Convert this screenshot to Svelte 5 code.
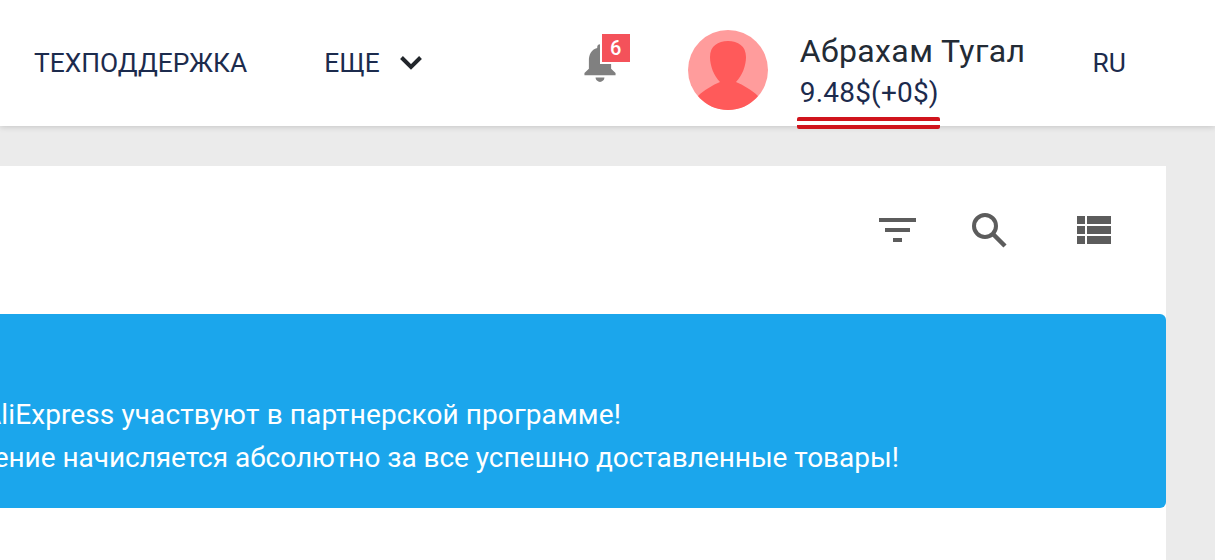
<script>
  const notifications = 6;
</script>

<style>
  :global(body) {
    margin: 0;
    background: #ebebeb;
    overflow: hidden;
  }
  .page {
    width: 1215px;
    height: 560px;
    overflow: hidden;
    font-family: Roboto, "Liberation Sans", sans-serif;
  }
  .header {
    height: 126px;
    background: #fff;
    box-shadow: 0 1px 6px rgba(0, 0, 0, 0.16);
    display: flex;
    align-items: center;
    padding-left: 34px;
    color: #1c2b4d;
    font-size: 26.4px;
    position: relative;
  }
  .more {
    display: flex;
    align-items: center;
    gap: 17px;
    margin-left: 77px;
  }
  .bell {
    position: relative;
    width: 40px;
    height: 40px;
    margin-left: 155px;
    margin-top: -2px;
  }
  .bell svg {
    display: block;
  }
  .badge {
    position: absolute;
    left: 22px;
    top: -8px;
    width: 28px;
    height: 28px;
    background: #f4525a;
    box-shadow: -2px 2px 0 #fff;
    color: #fff;
    font-size: 20px;
    font-weight: 500;
    line-height: 28px;
    text-align: center;
  }
  .avatar {
    margin-left: 68px;
    margin-top: 14px;
    width: 80px;
    height: 80px;
    flex: none;
  }
  .user {
    margin-left: 32px;
    margin-top: 20px;
    display: flex;
    flex-direction: column;
    align-items: flex-start;
  }
  .name {
    font-size: 32px;
    line-height: 40px;
    color: #232b35;
    letter-spacing: 0.4px;
  }
  .balance {
    font-size: 28px;
    line-height: 44px;
    letter-spacing: 0.2px;
    color: #1c2b4d;
    position: relative;
  }
  .balance::after {
    content: "";
    position: absolute;
    left: -3px;
    right: -1px;
    top: 46px;
    height: 4px;
    border-top: 4px solid #d0141c;
    border-bottom: 4px solid #d0141c;
    border-radius: 2px;
  }
  .lang {
    margin-left: 67px;
  }
  .card {
    margin-top: 40px;
    width: 1166px;
    height: 394px;
    background: #fff;
    display: flex;
    flex-direction: column;
  }
  .tools {
    height: 148px;
    display: flex;
    justify-content: flex-end;
    align-items: center;
    padding-right: 54px;
    box-sizing: border-box;
    padding-bottom: 19px;
  }
  .tools svg {
    display: block;
    fill: #5c5c5c;
  }
  .search {
    margin-left: 53px;
  }
  .list {
    margin-left: 68px;
  }
  .banner {
    height: 194px;
    background: #1ba6ec;
    border-radius: 0 6px 6px 0;
    color: #fff;
    font-size: 28px;
    line-height: 43px;
    padding-top: 79px;
    box-sizing: border-box;
    white-space: nowrap;
  }
  .first {
    margin-left: -17px;
    letter-spacing: 0.1px;
  }
  .second {
    margin-left: -166px;
    letter-spacing: -0.04px;
  }
</style>

<div class="page">
  <div class="header">
    <span>ТЕХПОДДЕРЖКА</span>
    <div class="more">
      <span>ЕЩЕ</span>
      <svg width="28" height="18" viewBox="0 0 28 18">
        <path d="M4.500 3.500 L14 13 L23.500 3.500" fill="none" stroke="#22262b" stroke-width="4" />
      </svg>
    </div>
    <div class="bell">
      <svg width="40" height="40" viewBox="0 0 36 36">
        <path d="M18 2c-1.500 0-2.500 1-2.500 2.500v1C10 7 8 11.500 8 17v7l-4 4v2h28v-2l-4-4v-7c0-5.500-2-10-7.500-11.500v-1C20.500 3 19.500 2 18 2z" fill="#808080" />
        <path d="M14 32h8c0 2-2 4-4 4s-4-2-4-4z" fill="#808080" />
      </svg>
      <div class="badge">{notifications}</div>
    </div>
    <svg class="avatar" viewBox="0 0 80 80">
      <circle cx="40" cy="40" r="40" fill="#ff9c9c" />
      <path d="M10 66 C16 60 25 55 32 52 C26 46 22 36 22 27 C22 16 30 11 40 11 C50 11 58 16 58 27 C58 36 54 46 48 52 C55 55 64 60 70 66 C62 75 52 80 40 80 C28 80 18 75 10 66 Z" fill="#ff5a5a" />
    </svg>
    <div class="user">
      <div class="name">Абрахам Тугал</div>
      <div class="balance">9.48$(+0$)</div>
    </div>
    <span class="lang">RU</span>
  </div>

  <div class="card">
    <div class="tools">
      <svg width="38" height="28" viewBox="0 0 38 28">
        <rect x="0" y="1" width="37" height="4" />
        <rect x="6" y="11" width="25" height="4" />
        <rect x="14" y="21" width="9" height="4" />
      </svg>
      <svg class="search" width="38" height="38" viewBox="0 0 38 38">
        <circle cx="15" cy="14" r="11" fill="none" stroke="#5c5c5c" stroke-width="4" />
        <path d="M23 22 L35 34" fill="none" stroke="#5c5c5c" stroke-width="4.500" />
      </svg>
      <svg class="list" width="36" height="30" viewBox="0 0 36 30">
        <rect x="1" y="0" width="8" height="8" />
        <rect x="11" y="0" width="24" height="8" />
        <rect x="1" y="10" width="8" height="8" />
        <rect x="11" y="10" width="24" height="8" />
        <rect x="1" y="20" width="8" height="8" />
        <rect x="11" y="20" width="24" height="8" />
      </svg>
    </div>
    <div class="banner">
      <div class="first">AliExpress участвуют в партнерской программе!</div>
      <div class="second">Вознаграждение начисляется абсолютно за все успешно доставленные товары!</div>
    </div>
  </div>
</div>
